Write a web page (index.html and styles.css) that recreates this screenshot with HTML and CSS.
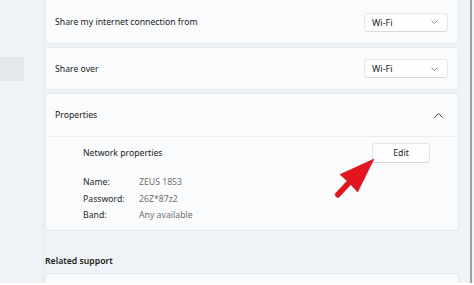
FILE: index.html
```html
<!DOCTYPE html>
<html lang="en">
  <head>
    <meta charset="UTF-8" />
    <meta name="viewport" content="width=device-width, initial-scale=1.0" />
    <title>Mobile hotspot</title>
    <link rel="stylesheet" href="styles.css">
  </head>
  <body>
    <div class="window">
      <div class="sidebar">
        <div class="nav-item active"></div>
      </div>

      <div class="main">
        <div class="card row">
          <span class="row-label">Share my internet connection from</span>
          <div class="select">
            <span>Wi-Fi</span>
            <svg class="chev" width="7" height="4" viewBox="0 0 7 4"><path d="M0.5 0.5 L3.5 3.5 L6.5 0.5" /></svg>
          </div>
        </div>

        <div class="card row">
          <span class="row-label">Share over</span>
          <div class="select">
            <span>Wi-Fi</span>
            <svg class="chev" width="7" height="4" viewBox="0 0 7 4"><path d="M0.5 0.5 L3.5 3.5 L6.5 0.5" /></svg>
          </div>
        </div>

        <div class="card expander">
          <div class="row expander-head">
            <span class="row-label">Properties</span>
            <svg class="chev-up" width="9" height="5" viewBox="0 0 9 5"><path d="M0.5 4.5 L4.5 0.5 L8.5 4.5" /></svg>
          </div>
          <div class="expander-body">
            <div class="props-top">
              <span>Network properties</span>
              <button class="btn">Edit</button>
            </div>
            <div class="props">
              <span class="key">Name:</span><span class="val">ZEUS 1853</span>
              <span class="key">Password:</span><span class="val">26Z*87z2</span>
              <span class="key">Band:</span><span class="val">Any available</span>
            </div>
          </div>
        </div>

        <h3 class="section-title">Related support</h3>
        <div class="card stub"></div>
      </div>

      <div class="scroll-gutter"></div>

      <!-- annotation arrow drawn over the page -->
      <svg class="pointer" width="474" height="285" viewBox="0 0 474 285">
        <path d="M374 159 L340 174.5 L347.2 181 L335.3 193.6 Q334.6 197.6 338.8 197.4 L350.8 184.6 L357.6 192 Z" />
      </svg>
    </div>
  </body>
</html>
```

FILE: styles.css
```css
html,
body {
  margin: 0;
  padding: 0;
}
body {
  font-family: "Noto Sans", "Open Sans", sans-serif;
  font-size: 8.7px;
  color: #1c1c1c;
  background-color: #ffffff;
}
.window {
  position: relative;
  display: flex;
  width: 474px;
  height: 283px;
  background-color: #eff3f7;
  overflow: hidden;
}
.sidebar {
  width: 43px;
  border-right: 1px solid #e6eaee;
  padding-top: 57px;
}
.nav-item.active {
  width: 24px;
  height: 24px;
  background-color: #e4e8ec;
}
.main {
  flex: 1;
  padding-left: 1px;
  display: flex;
  flex-direction: column;
}
.main > * {
  flex-shrink: 0;
}
.scroll-gutter {
  width: 11px;
  border-right: 2px solid #9aa0a6;
  background-color: #f1f4f7;
  margin-right: 2px;
}
.card {
  background-color: #f9fbfc;
  border: 1px solid #e5e9ed;
  border-radius: 4px;
  box-sizing: border-box;
}
.card + .card {
  margin-top: 3px;
}
.row {
  display: flex;
  align-items: center;
  justify-content: space-between;
  height: 43px;
  padding: 0 10px 0 9px;
  box-sizing: border-box;
}
.card.row:first-child {
  border-top: none;
  border-radius: 0 0 4px 4px;
  height: 44px;
  padding-top: 1px;
}
.select {
  display: flex;
  align-items: center;
  justify-content: space-between;
  width: 84px;
  height: 19px;
  box-sizing: border-box;
  padding: 0 9px 0 7px;
  background-color: #fefefe;
  border: 1px solid #e8e8e8;
  border-bottom-color: #dadada;
  border-radius: 3px;
  font-size: 9px;
}
.chev path {
  fill: none;
  stroke: #7a7a7a;
  stroke-width: 0.9;
}
.chev-up {
  margin-right: 5px;
}
.chev-up path {
  fill: none;
  stroke: #3a3a3a;
  stroke-width: 1;
}
.expander-head {
  border-bottom: 1px solid #eaedf0;
}
.expander-body {
  padding: 6px 28px 6px 37px;
}
.props-top {
  display: flex;
  align-items: center;
  justify-content: space-between;
  height: 20px;
}
.btn {
  width: 58px;
  height: 20px;
  font-family: inherit;
  font-size: 8.7px;
  color: #1c1c1c;
  background-color: #fefefe;
  border: 1px solid #e6e6e6;
  border-bottom-color: #d8d8d8;
  border-radius: 3px;
  padding: 0;
}
.props {
  display: grid;
  grid-template-columns: 56px auto;
  grid-auto-rows: 16.5px;
  align-items: center;
  margin-top: 11px;
}
.key {
  color: #2a2a2a;
}
.val {
  color: #707070;
}
.section-title {
  margin: 24px 0 6px 0;
  font-size: 8.7px;
  font-weight: 600;
  line-height: 12px;
}
.stub {
  height: 20px;
  border-bottom: none;
}
.pointer {
  position: absolute;
  left: 0;
  top: 0;
  pointer-events: none;
}
.pointer path {
  fill: #e3161f;
  stroke: #c1121a;
  stroke-width: 0.6;
  stroke-linejoin: round;
}
```
